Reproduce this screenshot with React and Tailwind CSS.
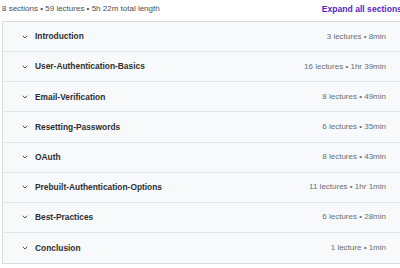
import { ChevronDown } from 'lucide-react';

const sections = [
  { title: 'Introduction', meta: '3 lectures • 8min' },
  { title: 'User-Authentication-Basics', meta: '16 lectures • 1hr 39min' },
  { title: 'Email-Verification', meta: '8 lectures • 49min' },
  { title: 'Resetting-Passwords', meta: '6 lectures • 35min' },
  { title: 'OAuth', meta: '8 lectures • 43min' },
  { title: 'Prebuilt-Authentication-Options', meta: '11 lectures • 1hr 1min' },
  { title: 'Best-Practices', meta: '6 lectures • 28min' },
  { title: 'Conclusion', meta: '1 lecture • 1min' },
];

const SectionRow = ({ section, last }) => {
  return (
    <div
      className={`flex items-center justify-between h-[30.15px] bg-[#f7f9fa] pl-[18px] pr-[23px] ${
        last ? '' : 'border-b border-[#e2e6e9]'
      }`}
    >
      <div className="flex items-center gap-[6px]">
        <ChevronDown size={8} strokeWidth={2.5} className="text-[#2d2f31]" />
        <span className="text-[8.4px] font-bold text-[#2d2f31]">{section.title}</span>
      </div>
      <span className="text-[8px] text-[#6a6f73]">{section.meta}</span>
    </div>
  );
};

export default function App() {
  return (
    <div
      className="w-[400px] h-[268px] overflow-hidden bg-white"
      style={{ fontFamily: '"Liberation Sans", Arial, sans-serif' }}
    >
      <div className="w-[410px] pl-[2px]">
        <div className="flex items-center justify-between h-[21px] pb-[3px] pr-[8px]">
          <span className="text-[8px] text-[#4a4e52]">
            8 sections • 59 lectures • 5h 22m total length
          </span>
          <span className="text-[8.6px] font-bold text-[#5624d0]">Expand all sections</span>
        </div>
        <div className="border border-[#d9dde0]">
          {sections.map((s, i) => (
            <SectionRow key={s.title} section={s} last={i === sections.length - 1} />
          ))}
        </div>
      </div>
    </div>
  );
}
